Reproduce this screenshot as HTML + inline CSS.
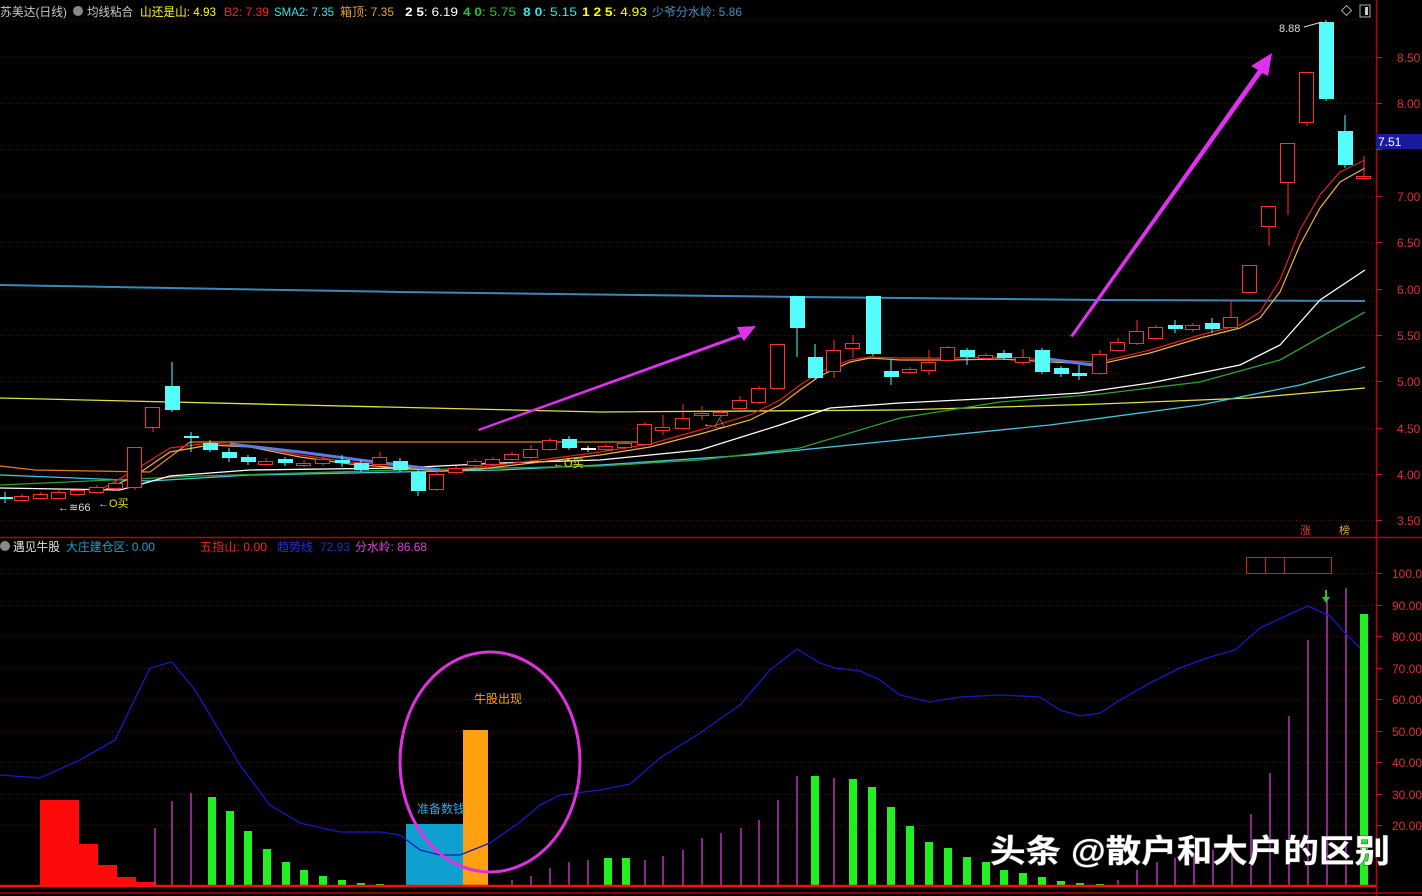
<!DOCTYPE html>
<html><head><meta charset="utf-8">
<style>
html,body{margin:0;padding:0;background:#000;width:1422px;height:896px;overflow:hidden}
svg{display:block}
text{font-family:"Liberation Sans","Noto Sans CJK SC",sans-serif}
</style></head>
<body>
<svg id="s" width="1422" height="896" xmlns="http://www.w3.org/2000/svg" font-size="12">
<rect width="1422" height="896" fill="#000"/>
<g id="grid" stroke="#700" stroke-dasharray="1,3" stroke-width="1"></g>
<line x1="1376.5" y1="0" x2="1376.5" y2="896" stroke="#b00" stroke-width="1.5"/>
<line x1="0" y1="537.5" x2="1422" y2="537.5" stroke="#b00" stroke-width="1.5"/>
<line x1="0" y1="893" x2="1422" y2="893" stroke="#b00" stroke-width="1.5"/>
<polyline fill="none" stroke="#3a88b8" stroke-width="2" points="0,285 400,292 800,297 1100,300 1365,301"/>
<polyline fill="none" stroke="#e0e040" stroke-width="1.3" points="0,398 300,405 600,412 900,410 1100,404 1250,398 1365,388"/>
<polyline fill="none" stroke="#e08020" stroke-width="1.3" points="0,466 35,470 150,472 190,442 650,442"/>
<polyline fill="none" stroke="#40c8e0" stroke-width="1.3" points="0,475 150,481 250,475 500,470 600,465 750,455 900,440 1050,425 1200,405 1300,385 1365,367"/>
<polyline fill="none" stroke="#30a030" stroke-width="1.3" points="0,485 200,476 400,470 600,466 700,460 800,448 900,418 1000,402 1100,394 1200,382 1280,360 1365,312"/>
<polyline fill="none" stroke="#ffffff" stroke-width="1.3" points="0,488 120,490 170,476 250,470 400,468 500,463 600,460 700,450 780,425 830,408 900,403 1000,398 1080,393 1150,383 1240,365 1280,345 1320,300 1365,270"/>
<polyline fill="none" stroke="#f0b040" stroke-width="1.2" points="100,492 135,476 170,452 210,445 250,447 300,457 350,464 400,468 440,471 480,469 540,462 600,455 650,447 700,434 750,420 780,405 800,390 820,376 850,362 870,358 900,360 950,360 1000,359 1050,362 1100,364 1150,353 1200,338 1240,328 1260,318 1280,292 1300,245 1320,208 1340,182 1365,168"/>
<polyline fill="none" stroke="#e02020" stroke-width="1.2" points="100,490 135,470 170,448 210,443 250,446 300,455 350,462 400,466 440,470 480,467 540,460 600,452 650,444 700,430 750,415 780,400 800,385 820,372 850,360 870,357 900,358 950,358 1000,357 1050,360 1100,362 1150,350 1200,335 1240,325 1260,312 1280,280 1300,230 1320,195 1340,172 1365,160"/>
<polyline fill="none" stroke="#5a7ee0" stroke-width="3" points="230,444 300,452 360,460 440,470"/>
<polyline fill="none" stroke="#5a7ee0" stroke-width="3" points="1035,357 1070,362 1100,366"/>
<g id="candles"></g>
<g fill="#e030f0" stroke="none">
<polygon points="478,429 740,334 737,327 756,326 744,341 741,337 479,431"/>
<polygon points="1070,336 1258,70 1251,66 1272,53 1268,76 1262,73 1073,337"/>
</g>
<text x="58" y="511" fill="#ddd" font-size="11">←≋66</text>
<text x="98" y="507" fill="#e0e020" font-size="11">←O买</text>
<text x="553" y="467" fill="#e0e020" font-size="11">←O买</text>
<text x="703" y="427" fill="#e0e020" font-size="11">←△</text>
<text x="1279" y="32" fill="#ddd" font-size="11">8.88</text>
<line x1="1304" y1="27" x2="1322" y2="22" stroke="#ddd"/>
<text x="1300" y="534" fill="#e04040" font-size="11">涨</text>
<text x="1339" y="534" fill="#e0a040" font-size="11">榜</text>
<g id="axis" fill="#e03030"></g>
<rect x="1376" y="134" width="46" height="15" fill="#1a1aa0"/>
<text x="1378" y="146" fill="#fff">7.51</text>
<rect x="1343" y="7" width="7" height="7" fill="none" stroke="#aaa" transform="rotate(45 1346.5 10.5)"/>
<rect x="1360" y="5" width="10" height="12" fill="none" stroke="#aaa"/><rect x="1365" y="7" width="3" height="8" fill="#ccc"/>
<text x="0" y="16" fill="#c8c8c8" textLength="67" lengthAdjust="spacingAndGlyphs">苏美达(日线)</text>
<circle cx="78" cy="11" r="5" fill="#888"/>
<text x="87" y="16" fill="#c8c8c8" textLength="46" lengthAdjust="spacingAndGlyphs">均线粘合</text>
<text x="140" y="16" fill="#ffff00" textLength="76" lengthAdjust="spacingAndGlyphs">山还是山: 4.93</text>
<text x="224" y="16" fill="#ff2020" textLength="45" lengthAdjust="spacingAndGlyphs">B2: 7.39</text>
<text x="274" y="16" fill="#40e0e0" textLength="60" lengthAdjust="spacingAndGlyphs">SMA2: 7.35</text>
<text x="340" y="16" fill="#e0a040" textLength="54" lengthAdjust="spacingAndGlyphs">箱顶: 7.35</text>
<text x="405" y="16" fill="#fff" textLength="53" lengthAdjust="spacingAndGlyphs"><tspan font-weight="bold">2 5</tspan>: 6.19</text>
<text x="463" y="16" fill="#30c030" textLength="53" lengthAdjust="spacingAndGlyphs"><tspan font-weight="bold">4 0</tspan>: 5.75</text>
<text x="523" y="16" fill="#40e0e0" textLength="54" lengthAdjust="spacingAndGlyphs"><tspan font-weight="bold">8 0</tspan>: 5.15</text>
<text x="582" y="16" fill="#ffff00" textLength="65" lengthAdjust="spacingAndGlyphs"><tspan font-weight="bold">1 2 5</tspan>: 4.93</text>
<text x="652" y="16" fill="#4090c0" textLength="90" lengthAdjust="spacingAndGlyphs">少爷分水岭: 5.86</text>
<circle cx="5" cy="546" r="5" fill="#888"/>
<text x="13" y="551" fill="#e0e0e0" textLength="47" lengthAdjust="spacingAndGlyphs">遇见牛股</text>
<text x="66" y="551" fill="#20a0d0" textLength="89" lengthAdjust="spacingAndGlyphs">大庄建仓区: 0.00</text>
<text x="200" y="551" fill="#ff2020" textLength="67" lengthAdjust="spacingAndGlyphs">五指山: 0.00</text>
<text x="277" y="551" fill="#2030e0" textLength="36" lengthAdjust="spacingAndGlyphs">趋势线</text>
<text x="320" y="551" fill="#2030c0" textLength="30" lengthAdjust="spacingAndGlyphs">72.93</text>
<text x="355" y="551" fill="#e040e0" textLength="72" lengthAdjust="spacingAndGlyphs">分水岭: 86.68</text>
<g id="bars"></g>
<rect x="406" y="824" width="57" height="62" fill="#10a0d0"/>
<rect x="463" y="730" width="25" height="156" fill="#ffa010"/>
<text x="417" y="813" fill="#30a8e0">准备数钱</text>
<text x="474" y="703" fill="#ffa010">牛股出现</text>
<line x1="0" y1="886" x2="1376" y2="886" stroke="#f01010" stroke-width="2.5"/>
<polyline fill="none" stroke="#1818c8" stroke-width="1.3" points="0,775 40,778 80,760 115,740 150,668 172,662 195,690 240,765 270,805 300,823 340,832 380,832 400,835 420,850 440,855 460,855 490,843 520,822 540,805 560,795 600,790 630,784 660,758 700,733 740,705 770,670 797,649 820,663 835,668 860,671 880,680 900,695 930,702 960,697 1000,695 1040,697 1060,710 1080,716 1100,713 1120,700 1150,683 1180,668 1210,657 1235,650 1260,628 1290,614 1308,606 1330,616 1345,633 1360,648"/>
<ellipse cx="490" cy="762" rx="90" ry="110" fill="none" stroke="#e030e0" stroke-width="3"/>
<rect x="1246.5" y="557.5" width="85" height="16" fill="none" stroke="#d02020"/>
<line x1="1265.5" y1="557" x2="1265.5" y2="574" stroke="#d02020"/>
<line x1="1284.5" y1="557" x2="1284.5" y2="574" stroke="#d02020"/>
<line x1="1326" y1="590" x2="1326" y2="600" stroke="#30c030" stroke-width="2"/>
<polygon points="1322,597 1330,597 1326,603" fill="#30c030"/>
<g id="axis2" fill="#e03030"></g>
<text x="990" y="862" fill="#fff" font-size="32" font-weight="bold" stroke="#444" stroke-width="1" style="paint-order:stroke" textLength="400" lengthAdjust="spacingAndGlyphs">头条 @散户和大户的区别</text>
</svg>
<script>
var NS="http://www.w3.org/2000/svg";
function el(p,t,a){var e=document.createElementNS(NS,t);for(var k in a)e.setAttribute(k,a[k]);document.getElementById(p).appendChild(e);return e;}
var up=[[8.5,57],[8,103],[7.5,149],[7,196],[6.5,242],[6,289],[5.5,335],[5,381],[4.5,428],[4,474],[3.5,520]];
el("grid","line",{x1:0,y1:20,x2:1376,y2:20});
up.forEach(function(p){el("grid","line",{x1:0,y1:p[1]+.5,x2:1376,y2:p[1]+.5});
 if(p[0]!=7.5){var t=el("axis","text",{x:1397,y:p[1]+5});t.textContent=p[0].toFixed(2);}
 el("axis","line",{x1:1376,y1:p[1]+.5,x2:1382,y2:p[1]+.5,stroke:"#c02020"});});
var lo=[[100,573,"100.0"],[90,605,"90.00"],[80,636,"80.00"],[70,668,"70.00"],[60,699,"60.00"],[50,731,"50.00"],[40,762,"40.00"],[30,794,"30.00"],[20,825,"20.00"]];
lo.forEach(function(p){el("grid","line",{x1:0,y1:p[1]+.5,x2:1376,y2:p[1]+.5});
 var t=el("axis2","text",{x:1392,y:p[1]+5});t.textContent=p[2];
 el("axis2","line",{x1:1376,y1:p[1]+.5,x2:1382,y2:p[1]+.5,stroke:"#c02020"});});
var C=[[5,497,499,492,503,"c"],[22,496,500,494,502,"r"],[41,494,498,492,500,"r"],[59,492,498,490,500,"r"],[78,490,494,488,496,"r"],[97,487,492,485,494,"r"],[116,483,488,480,490,"r"],[135,447,487,447,490,"r"],[153,407,427,407,432,"r"],[172,386,410,362,412,"c"],[191,436,438,432,452,"c"],[210,443,450,440,452,"c"],[229,452,458,448,462,"c"],[248,457,462,455,465,"c"],[266,461,464,458,466,"r"],[285,459,463,457,466,"c"],[304,463,465,460,467,"r"],[323,459,463,456,466,"r"],[342,460,463,455,467,"c"],[361,463,470,460,472,"c"],[380,457,464,452,466,"r"],[400,461,470,458,472,"c"],[418,472,491,470,496,"c"],[437,474,489,472,491,"r"],[456,468,472,466,474,"r"],[475,461,465,459,467,"r"],[493,459,464,457,466,"r"],[512,454,459,452,461,"r"],[531,449,457,445,459,"r"],[550,440,449,438,451,"r"],[569,439,448,436,450,"c"],[588,448,450,446,452,"w"],[606,446,449,444,451,"r"],[625,443,447,441,449,"r"],[645,424,444,422,446,"r"],[663,427,430,415,435,"r"],[683,418,428,404,430,"r"],[702,413,415,406,420,"r"],[721,412,415,410,418,"r"],[740,400,408,396,410,"r"],[759,388,402,386,404,"r"],[778,344,388,344,390,"r"],[797,296,328,296,357,"c"],[815,357,378,344,380,"c"],[834,350,371,340,378,"r"],[853,343,348,335,358,"r"],[873,296,354,296,356,"c"],[891,371,377,360,385,"c"],[910,369,372,367,374,"r"],[929,362,370,350,375,"r"],[948,347,360,346,362,"r"],[967,350,357,348,365,"c"],[986,355,358,353,360,"r"],[1004,353,358,350,360,"c"],[1023,357,362,349,365,"r"],[1042,350,372,348,374,"c"],[1061,368,374,366,377,"c"],[1079,373,376,365,380,"c"],[1100,354,373,350,375,"r"],[1118,342,350,338,352,"r"],[1137,331,343,320,345,"r"],[1156,327,338,325,340,"r"],[1175,325,329,320,333,"c"],[1193,325,329,323,332,"r"],[1212,323,329,318,333,"c"],[1231,317,327,300,329,"r"],[1250,265,292,265,294,"r"],[1269,206,226,206,246,"r"],[1288,143,182,143,215,"r"],[1307,72,122,72,126,"r"],[1326,22,99,20,101,"c"],[1345,131,165,115,168,"c"],[1364,176,178,156,180,"r"]];
C.forEach(function(c){var col=c[5]=="r"?"#ff3030":(c[5]=="w"?"#fff":"#54fcfc");
 el("candles","line",{x1:c[0],y1:c[3],x2:c[0],y2:c[4],stroke:col});
 if(c[5]=="r")el("candles","rect",{x:c[0]-7.5,y:c[1]+.5,width:14,height:Math.max(1,c[2]-c[1]),fill:"#000",stroke:col});
 else el("candles","rect",{x:c[0]-7,y:c[1],width:15,height:Math.max(2,c[2]-c[1]),fill:col});});
var R=[[40,79,800],[79,98,844],[98,117,865],[117,136,877],[136,155,882],[155,170,885]];
R.forEach(function(r){el("bars","rect",{x:r[0],y:r[2],width:r[1]-r[0],height:886-r[2],fill:"#ff0a0a"});});
var G=[[212,797],[230,811],[248,831],[267,849],[286,862],[304,870],[323,876],[342,880],[361,883],[380,884],[398,885],[608,858],[626,858],[815,776],[853,779],[872,787],[891,807],[910,826],[929,842],[948,848],[967,857],[986,862],[1004,870],[1023,873],[1042,877],[1061,881],[1080,883],[1100,884],[1364,614]];
G.forEach(function(g){el("bars","rect",{x:g[0]-4,y:g[1],width:8,height:886-g[1],fill:"#20f020"});});
var M=[[155,828],[172,801],[191,793],[512,880],[531,876],[550,868],[569,862],[588,860],[645,860],[663,856],[683,850],[702,838],[721,833],[741,828],[759,820],[778,800],[797,776],[834,778],[1118,880],[1137,870],[1157,862],[1175,858],[1194,855],[1213,850],[1232,845],[1251,814],[1270,773],[1289,716],[1308,640],[1327,598],[1346,588]];
M.forEach(function(m){el("bars","line",{x1:m[0],y1:m[1],x2:m[0],y2:886,stroke:"#d040d0","stroke-width":1.3});});
</script>
</body></html>
